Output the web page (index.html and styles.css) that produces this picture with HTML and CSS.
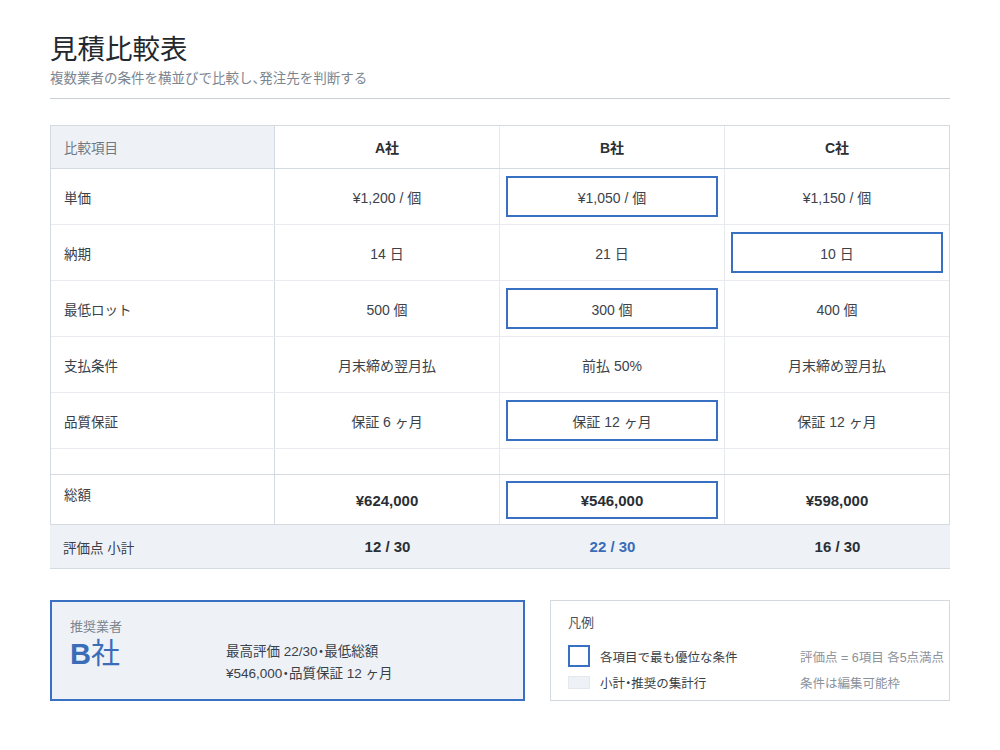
FILE: index.html
```html
<!DOCTYPE html>
<html lang="ja">
<head>
<meta charset="utf-8">
<title>見積比較表</title>
<link rel="stylesheet" href="styles.css">
</head>
<body>
<div class="page">
  <header class="head">
    <h1 class="title">見積比較表</h1>
    <p class="subtitle">複数業者の条件を横並びで比較し<span class="n">、</span>発注先を判断する</p>
  </header>

  <div class="table">
    <div class="row row-head">
      <div class="cell label label-head">比較項目</div>
      <div class="cell vendor">A社</div>
      <div class="cell vendor">B社</div>
      <div class="cell vendor">C社</div>
    </div>
    <div class="row row-item">
      <div class="cell label">単価</div>
      <div class="cell val">¥1,200 / 個</div>
      <div class="cell val"><span class="best">¥1,050 / 個</span></div>
      <div class="cell val">¥1,150 / 個</div>
    </div>
    <div class="row row-item">
      <div class="cell label">納期</div>
      <div class="cell val">14 日</div>
      <div class="cell val">21 日</div>
      <div class="cell val"><span class="best">10 日</span></div>
    </div>
    <div class="row row-item">
      <div class="cell label">最低ロット</div>
      <div class="cell val">500 個</div>
      <div class="cell val"><span class="best">300 個</span></div>
      <div class="cell val">400 個</div>
    </div>
    <div class="row row-item">
      <div class="cell label">支払条件</div>
      <div class="cell val">月末締め翌月払</div>
      <div class="cell val">前払 50%</div>
      <div class="cell val">月末締め翌月払</div>
    </div>
    <div class="row row-item">
      <div class="cell label">品質保証</div>
      <div class="cell val">保証 6 ヶ月</div>
      <div class="cell val"><span class="best">保証 12 ヶ月</span></div>
      <div class="cell val">保証 12 ヶ月</div>
    </div>
    <div class="row row-spacer">
      <div class="cell label"></div>
      <div class="cell val"></div>
      <div class="cell val"></div>
      <div class="cell val"></div>
    </div>
    <div class="row row-total">
      <div class="cell label">総額</div>
      <div class="cell val strong">¥624,000</div>
      <div class="cell val strong"><span class="best">¥546,000</span></div>
      <div class="cell val strong">¥598,000</div>
    </div>
  </div>
  <div class="score">
    <div class="cell label">評価点 小計</div>
    <div class="cell val strong">12 / 30</div>
    <div class="cell val strong win">22 / 30</div>
    <div class="cell val strong">16 / 30</div>
  </div>

  <div class="bottom">
    <section class="reco">
      <div class="reco-main">
        <div class="reco-cap">推奨業者</div>
        <div class="reco-name">B<span class="thin">社</span></div>
      </div>
      <div class="reco-note">
        <div>最高評価 22/30<span class="n">・</span>最低総額</div>
        <div>¥546,000<span class="n">・</span>品質保証 12 ヶ月</div>
      </div>
    </section>
    <section class="legend">
      <div class="legend-title">凡例</div>
      <div class="legend-row first">
        <span class="sw sw-best"></span>
        <span class="legend-text">各項目で最も優位な条件</span>
        <span class="legend-note">評価点 = 6項目 各5点満点</span>
      </div>
      <div class="legend-row second">
        <span class="sw sw-sum"></span>
        <span class="legend-text">小計<span class="n">・</span>推奨の集計行</span>
        <span class="legend-note">条件は編集可能枠</span>
      </div>
    </section>
  </div>
</div>
</body>
</html>
```

FILE: styles.css
```css
* { box-sizing: border-box; }
html, body {
  margin: 0;
  padding: 0;
  background: #ffffff;
}
body {
  font-family: "Liberation Sans", "Noto Sans CJK JP", sans-serif;
  color: #333a42;
}
.n { font-feature-settings: "palt"; }
.page {
  width: 1000px;
  height: 750px;
  padding: 33px 50px 0 50px;
}
.head {
  border-bottom: 1px solid #c9d0d8;
  padding-bottom: 10px;
}
.title {
  margin: 0;
  font-size: 27.5px;
  font-weight: 400;
  line-height: 34px;
  color: #23282e;
}
.subtitle {
  margin: 3px 0 0 0;
  font-size: 13.5px;
  line-height: 18px;
  color: #7b8590;
}
.table {
  margin-top: 26px;
  border: 1.5px solid #d3dae2;
  border-bottom: none;
}
.row {
  display: grid;
  grid-template-columns: 224px 225px 225px 1fr;
}
.cell {
  display: flex;
  align-items: center;
  border-right: 1px solid #e6eaef;
  font-size: 14px;
}
.cell:last-child { border-right: none; }
.cell.label {
  padding-left: 13px;
  font-size: 13.5px;
  color: #3a4048;
  border-right: 1.5px solid #d3dae2;
}
.val {
  justify-content: center;
  color: #3c424a;
}
.row-head {
  height: 43px;
  border-bottom: 1.5px solid #d3dae2;
}
.label-head {
  background: #eef2f6;
  color: #6f7882 !important;
}
.vendor {
  justify-content: center;
  font-weight: 700;
  font-size: 14px;
  color: #2a2f35;
}
.row-item {
  height: 56px;
  border-bottom: 1px solid #e8ecf0;
}
.row-spacer {
  height: 26px;
  border-bottom: 1.5px solid #d3dae2;
}
.row-total {
  height: 50px;
  border-bottom: 1.5px solid #d3dae2;
}
.row-item .val {
  padding: 7px 6px;
}
.row-total .val {
  padding: 6px 6px 5px 6px;
}
.best {
  align-self: stretch;
  flex: 1;
  display: flex;
  align-items: center;
  justify-content: center;
  border: 2px solid #3a70c2;
  background: #ffffff;
}
.row-total .label { padding-bottom: 11px; }
.strong {
  font-weight: 700;
  font-size: 15px;
  color: #2a2f35;
}
.score {
  display: grid;
  grid-template-columns: 225px 225px 225px 1fr;
  height: 44px;
  background: #eef2f6;
  border-bottom: 1.5px solid #d3dae2;
}
.score .cell { border-right: none; }
.score .label { border-right: none; padding-left: 13px; }
.score .win { color: #3a6cb8; }
.bottom {
  margin-top: 31px;
  display: flex;
  gap: 25px;
  height: 101px;
}
.reco {
  width: 475px;
  background: #eef2f7;
  border: 2px solid #3a70c2;
  display: flex;
  align-items: flex-start;
  padding: 16px 18px 0 18px;
}
.reco-main { width: 156px; }
.reco-cap {
  font-size: 13px;
  color: #7b8590;
  line-height: 18px;
}
.reco-name {
  font-size: 29px;
  font-weight: 700;
  color: #3a6cb8;
  line-height: 32px;
  margin-top: 2px;
}
.thin { font-weight: 400; }
.reco-note {
  margin-top: 23px;
  font-size: 13.5px;
  line-height: 21.5px;
  color: #3a4048;
}
.legend {
  flex: 1;
  border: 1.5px solid #d3d9df;
  padding: 13px 0 0 17px;
}
.legend-title {
  font-size: 13px;
  color: #4a5058;
  line-height: 18px;
}
.legend-row {
  display: flex;
  align-items: center;
  white-space: nowrap;
}
.legend-row.first { margin-top: 13px; height: 22px; }
.legend-row.second { margin-top: 7px; height: 16px; }
.sw {
  display: inline-block;
  width: 22px;
  flex: none;
}
.sw-best {
  height: 22px;
  border: 2px solid #3a70c2;
}
.sw-sum {
  height: 13px;
  background: #eef2f6;
  border: 1px solid #e3e8ee;
}
.legend-text {
  margin-left: 10px;
  font-size: 12.5px;
  color: #3a4048;
  width: 200px;
  flex: none;
}
.legend-note {
  color: #8a929b;
  font-size: 12.5px;
}
```
